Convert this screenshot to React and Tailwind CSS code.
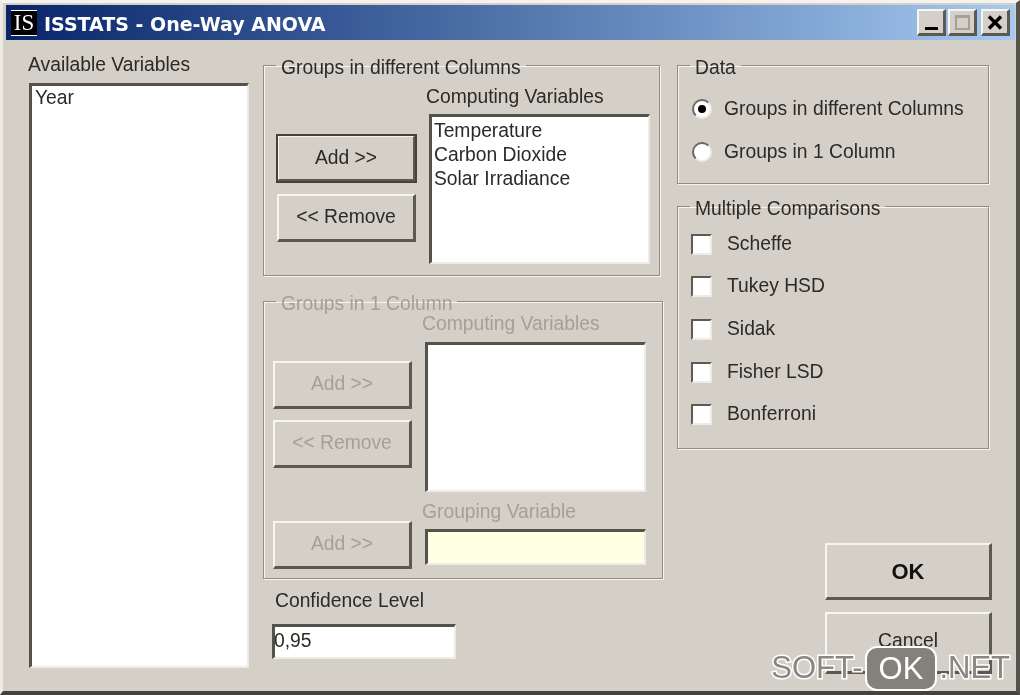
const font = "font-['Liberation_Sans',Arial,sans-serif]"

const raised =
  'border-t-2 border-l-2 border-t-[#f6f5f2] border-l-[#f6f5f2] border-r-[3px] border-b-[3px] border-r-[#5c5953] border-b-[#5c5953] bg-[#d4d0c8]'
const sunken =
  'border-t-[3px] border-l-[3px] border-t-[#55524c] border-l-[#55524c] border-r-2 border-b-2 border-r-[#ecebe6] border-b-[#ecebe6]'

const Button = ({ children, disabled, className = '' }) => (
  <button
    className={`${raised} flex items-center justify-center w-[139px] text-[19.3px] ${
      disabled ? 'text-[#a3a099]' : 'text-[#2b2a28]'
    } ${className}`}
  >
    {children}
  </button>
)

const GroupBox = ({ title, disabled, className = '', children }) => (
  <fieldset
    className={`border border-[#8f8c86] shadow-[inset_1px_1px_0_#f6f5f2,1px_1px_0_#f6f5f2] ${className}`}
  >
    <legend
      className={`ml-[12px] px-[5px] h-[24px] leading-[24px] text-[19.3px] ${
        disabled ? 'text-[#a3a099]' : 'text-[#2b2a28]'
      }`}
    >
      <span className="block translate-y-[3px]">{title}</span>
    </legend>
    {children}
  </fieldset>
)

const Radio = ({ checked }) => (
  <span className="relative w-[20px] h-[20px] rounded-full bg-white border-2 border-[#6b6862] border-r-[#ecebe6] border-b-[#ecebe6] flex items-center justify-center">
    {checked && <span className="w-[8px] h-[8px] rounded-full bg-black" />}
  </span>
)

const Check = ({ label }) => (
  <div className="flex items-center h-[24px] pl-[13px] mb-[18.7px]">
    <span className="w-[21px] h-[21px] bg-white border-t-2 border-l-2 border-t-[#5e5b55] border-l-[#5e5b55] border-r-2 border-b-2 border-r-[#ecebe6] border-b-[#ecebe6]" />
    <span className="ml-[15px] text-[19.3px] text-[#2b2a28]">{label}</span>
  </div>
)

const App = () => {
  return (
    <div
      className={`${font} relative w-[1020px] h-[695px] overflow-hidden bg-[#d4d0c8] pt-[5px] pl-[6px] pr-[1px] border-t-[3px] border-t-[#f4f3ef] border-l-[3px] border-l-[#ecebe6] border-r-[4px] border-r-[#55524c] border-b-[4px] border-b-[#45423d] blur-[0.6px]`}
    >
      {/* title bar */}
      <div className="-mt-[3px] -ml-[3px] h-[35px] flex items-center bg-gradient-to-r from-[#0a246a] to-[#a6caf0]">
        <div className="ml-[5px] w-[26px] h-[26px] bg-black flex items-center justify-center border-y border-y-white">
          <span className="font-['Liberation_Serif',serif] text-[23px] leading-none text-white">IS</span>
        </div>
        <span className="ml-[7px] pt-[3px] font-['DejaVu_Sans',sans-serif] font-bold text-[19px] text-white">
          ISSTATS - One-Way ANOVA
        </span>
        <div className="ml-auto mr-[5px] flex items-center gap-[2px]">
          <div className={`${raised} w-[29px] h-[27px] flex items-end justify-center pb-[3px]`}>
            <span className="w-[13px] h-[3px] bg-black" />
          </div>
          <div className={`${raised} w-[29px] h-[27px] flex items-center justify-center`}>
            <span className="w-[15px] h-[15px] border-2 border-t-[3px] border-[#a3a099]" />
          </div>
          <div className={`${raised} ml-[2px] w-[29px] h-[27px] flex items-center justify-center`}>
            <svg width="16" height="15" viewBox="0 0 16 15">
              <path d="M2 1.5 14 13.5M14 1.5 2 13.5" stroke="#000" strokeWidth="3.4" />
            </svg>
          </div>
        </div>
      </div>

      {/* dialog body */}
      <div className="flex pl-[19px] pt-[12px]">
        <div className="w-[234px] shrink-0">
          <div className="h-[24px] leading-[24px] pt-[1px] text-[19.3px] text-[#2b2a28]">Available Variables</div>
          <div className={`${sunken} mt-[7px] ml-[1px] w-[220px] h-[585px] bg-white pl-[3px] text-[19.3px] leading-[24px] text-[#2b2a28]`}>
            Year
          </div>
        </div>

        <div className="w-[415px] shrink-0">
          <GroupBox title="Groups in different Columns" className="w-[397px] h-[223px] mt-[1px] ml-[1px]">
            <div className="flex pl-[13px]">
              <div className="w-[149px] pt-[58px] flex flex-col gap-[12px]">
                <Button className="h-[47px] outline-2 outline-[#45423d] -outline-offset-1">Add &gt;&gt;</Button>
                <Button className="h-[48px]">&lt;&lt; Remove</Button>
              </div>
              <div className="w-[224px]">
                <div className="h-[24px] leading-[24px] mt-[8px] text-[19.3px] text-[#2b2a28]">Computing Variables</div>
                <div className={`${sunken} ml-[3px] mt-[5px] w-[221px] h-[150px] bg-white pl-[2px] pt-[2px] text-[19.3px] leading-[24px] text-[#2b2a28]`}>
                  <div>Temperature</div>
                  <div>Carbon Dioxide</div>
                  <div>Solar Irradiance</div>
                </div>
              </div>
            </div>
          </GroupBox>

          <GroupBox title="Groups in 1 Column" disabled className="w-[400px] h-[290px] mt-[13px] ml-[1px]">
            <div className="flex pl-[9px]">
              <div className="w-[149px] pt-[48px] flex flex-col">
                <Button disabled className="h-[48px]">Add &gt;&gt;</Button>
                <Button disabled className="h-[48px] mt-[11px]">&lt;&lt; Remove</Button>
                <Button disabled className="h-[48px] mt-[53px]">Add &gt;&gt;</Button>
              </div>
              <div className="w-[226px]">
                <div className="h-[24px] leading-[24px] text-[19.3px] text-[#a3a099] -mt-[1px]">Computing Variables</div>
                <div className={`${sunken} ml-[3px] mt-[6px] w-[221px] h-[150px] bg-white`} />
                <div className="h-[24px] leading-[24px] text-[19.3px] text-[#a3a099] mt-[8px]">Grouping Variable</div>
                <div className={`${sunken} ml-[3px] mt-[5px] w-[221px] h-[36px] bg-[#ffffe3]`} />
              </div>
            </div>
          </GroupBox>

          <div className="h-[24px] leading-[24px] text-[19.3px] text-[#2b2a28] ml-[13px] mt-[10px]">Confidence Level</div>
          <div className={`${sunken} ml-[10px] mt-[11px] w-[184px] h-[35px] bg-white text-[19.3px] leading-[27px] text-[#2b2a28]`}>
            <span className="-ml-[1px]">0,95</span>
          </div>
        </div>

        <div className="w-[314px] shrink-0">
          <GroupBox title="Data" className="w-[312px] h-[131px] mt-[1px]">
            <div className="pl-[14px] pt-[22px] flex flex-col gap-[23px]">
              <div className="flex items-center h-[20px]">
                <Radio checked />
                <span className="ml-[12px] text-[19.3px] text-[#2b2a28]">Groups in different Columns</span>
              </div>
              <div className="flex items-center h-[20px]">
                <Radio />
                <span className="ml-[12px] text-[19.3px] text-[#2b2a28]">Groups in 1 Column</span>
              </div>
            </div>
          </GroupBox>

          <GroupBox title="Multiple Comparisons" className="w-[312px] h-[255px] mt-[10px]">
            <div className="pt-[14px]">
              <Check label="Scheffe" />
              <Check label="Tukey HSD" />
              <Check label="Sidak" />
              <Check label="Fisher LSD" />
              <Check label="Bonferroni" />
            </div>
          </GroupBox>

          <div className="ml-[148px] mt-[94px] flex flex-col gap-[12px]">
            <Button className="w-[167px] h-[57px] font-bold text-[22px] text-[#111]">OK</Button>
            <Button className="w-[167px] h-[62px] pb-[2px]">Cancel</Button>
          </div>
        </div>
      </div>

      {/* watermark */}
      <div className="absolute right-[6px] bottom-0 h-[45px] flex items-center font-['Liberation_Sans',sans-serif] text-[31px] text-[#8a8780] [-webkit-text-stroke:3px_#ffffff] [paint-order:stroke_fill]">
        <span>SOFT-</span>
        <span className="mx-[2px] px-[12px] h-[45px] leading-[41px] rounded-[12px] bg-[#84817a] border-2 border-white text-white [-webkit-text-stroke:0]">OK</span>
        <span>.NET</span>
      </div>
    </div>
  )
}

export default App
